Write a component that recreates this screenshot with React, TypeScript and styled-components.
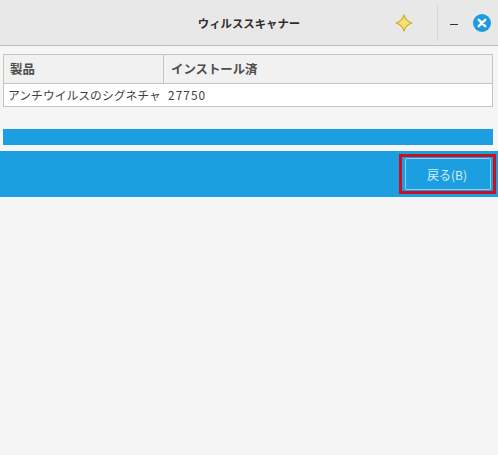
import styled, { createGlobalStyle } from 'styled-components';

const GlobalStyle = createGlobalStyle`
    html, body {
        margin: 0;
        padding: 0;
        height: 100%;
    }
    body {
        background: #f5f5f5;
        font-family: 'Noto Sans CJK JP', 'Noto Sans', sans-serif;
    }
`;

const Window = styled.div`
    width: 498px;
    height: 455px;
    overflow: hidden;
    display: flex;
    flex-direction: column;
    background: #f5f5f5;
`;

const TitleBar = styled.header`
    height: 45px;
    flex: none;
    display: grid;
    grid-template-columns: 1fr auto 1fr;
    align-items: center;
    background: #e8e8e8;
    border-bottom: 1px solid #bdbdbd;
`;

const Title = styled.h1`
    grid-column: 2;
    margin: 0;
    font-size: 11.4px;
    font-weight: 700;
    color: #2e2e2e;
`;

const TitleActions = styled.div`
    grid-column: 3;
    justify-self: end;
    display: flex;
    align-items: center;
    height: 36px;
    padding-right: 7px;
`;

const Divider = styled.span`
    width: 1px;
    height: 36px;
    margin: 0 8px 0 24px;
    background: #d6d6d6;
`;

const Minimize = styled.span`
    width: 8px;
    height: 1px;
    margin: 4px 15px 0 4px;
    background: #333333;
`;

const Table = styled.div`
    margin: 8px 5px 0 3px;
    border: 1px solid #c4c4c4;
    background: #ffffff;
`;

const Row = styled.div<{ $head?: boolean }>`
    display: grid;
    grid-template-columns: 159px 1fr;
    align-items: center;
    height: ${(p) => (p.$head ? '28px' : '22px')};
    background: ${(p) => (p.$head ? '#f1f1f1' : '#ffffff')};
    border-bottom: ${(p) => (p.$head ? '1px solid #c4c4c4' : 'none')};
`;

const HeadCell = styled.div<{ $divided?: boolean }>`
    height: 100%;
    display: flex;
    align-items: center;
    padding-left: ${(p) => (p.$divided ? '7px' : '6px')};
    font-size: 12.4px;
    font-weight: 700;
    color: #4d4d4d;
    border-left: ${(p) => (p.$divided ? '1px solid #c4c4c4' : 'none')};
`;

const Cell = styled.div<{ $numeric?: boolean }>`
    padding-left: ${(p) => (p.$numeric ? '5px' : '4px')};
    padding-bottom: 2px;
    font-size: 11.8px;
    white-space: nowrap;
    letter-spacing: ${(p) => (p.$numeric ? '1.1px' : '0')};
    color: #404040;
`;

const Progress = styled.div`
    height: 16px;
    margin: 22px 5px 0 3px;
    background: #1c9fe0;
`;

const ActionBar = styled.div`
    height: 46px;
    margin-top: 6px;
    display: flex;
    align-items: center;
    justify-content: flex-end;
    padding-right: 7px;
    background: #1c9fe0;
`;

const BackButton = styled.button`
    position: relative;
    width: 86px;
    height: 32px;
    padding: 0 2px 0 0;
    border: 1px solid #8fd0f2;
    border-radius: 2px;
    background: #1c9fe0;
    color: #d5eefb;
    font-family: inherit;
    font-size: 12px;

    /* red annotation drawn over the screenshot */
    &::after {
        content: '';
        position: absolute;
        inset: -5px -6px -5px -7px;
        border: 3px solid #c8101e;
    }
`;

export default function App() {
    return (
        <Window>
            <GlobalStyle />
            <TitleBar>
                <Title>ウィルススキャナー</Title>
                <TitleActions>
                    <svg width="18" height="18" viewBox="0 0 18 18" aria-hidden="true">
                        <path
                            d="M9 0.8 C10 5 12 7.4 16.8 9 C12 10.6 10 13 9 17.2 C8 13 6 10.6 1.2 9 C6 7.4 8 5 9 0.8 Z"
                            fill="#f5e37a"
                            stroke="#cdb021"
                            strokeWidth="1.2"
                            strokeLinejoin="round"
                        />
                    </svg>
                    <Divider />
                    <Minimize />
                    <svg width="18" height="18" viewBox="0 0 18 18" aria-hidden="true">
                        <circle cx="9" cy="9" r="9" fill="#1f9ae0" />
                        <path d="M5.8 5.8 L12.2 12.2 M12.2 5.8 L5.8 12.2" stroke="#ffffff" strokeWidth="2.4" strokeLinecap="round" />
                    </svg>
                </TitleActions>
            </TitleBar>
            <Table>
                <Row $head>
                    <HeadCell>製品</HeadCell>
                    <HeadCell $divided>インストール済</HeadCell>
                </Row>
                <Row>
                    <Cell>アンチウイルスのシグネチャ</Cell>
                    <Cell $numeric>27750</Cell>
                </Row>
            </Table>
            <Progress />
            <ActionBar>
                <BackButton>戻る(B)</BackButton>
            </ActionBar>
        </Window>
    );
}
